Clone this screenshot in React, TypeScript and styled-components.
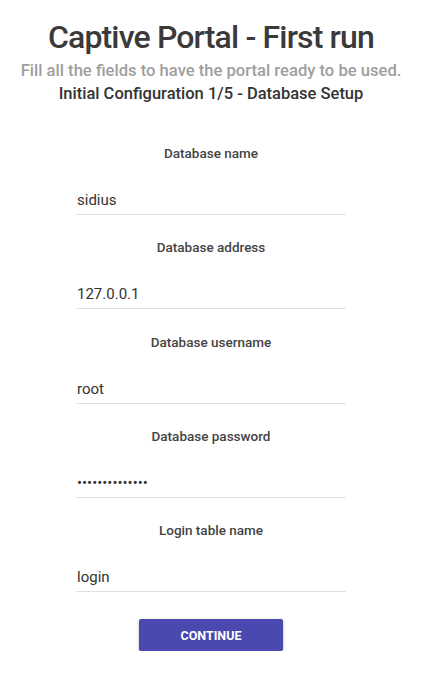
import * as React from "react";
import styled, { createGlobalStyle } from "styled-components";

const GlobalStyle = createGlobalStyle`
    body {
        margin: 0;
        background: #fff;
        font-family: Roboto, "Liberation Sans", sans-serif;
    }
`;

const Page = styled.div`
    display: flex;
    flex-direction: column;
    align-items: center;
    padding: 17px 5px 0 0;
`;

const Title = styled.h1`
    margin: 0;
    font-size: 32px;
    font-weight: 500;
    letter-spacing: -0.85px;
    color: #3a3a3a;
    line-height: 40px;
`;

const Subtitle = styled.div`
    margin-top: 4px;
    font-size: 16.6px;
    font-weight: 500;
    color: #9e9e9e;
    line-height: 20px;
`;

const StepTitle = styled.div`
    margin-top: 2px;
    font-size: 16.5px;
    font-weight: 500;
    color: #333;
    line-height: 22px;
`;

const Form = styled.form`
    display: flex;
    flex-direction: column;
    width: 270px;
    margin-top: 40px;
`;

const Field = styled.div`
    display: flex;
    flex-direction: column;
    height: 94.25px;
`;

const Label = styled.label`
    text-align: center;
    font-size: 13.5px;
    font-weight: 500;
    color: #444;
    line-height: 16px;
`;

const Input = styled.input`
    margin-top: 23px;
    border: none;
    border-bottom: 1px solid #e0e0e0;
    outline: none;
    padding: 7px 1px 5px;
    font-family: Roboto, "Liberation Sans", sans-serif;
    font-size: 15px;
    color: #333;
    background: transparent;
`;

const ContinueButton = styled.button`
    align-self: center;
    width: 144px;
    height: 32px;
    margin-top: 3px;
    border: none;
    border-radius: 2px;
    background: #4949b0;
    color: #fff;
    font-family: Roboto, "Liberation Sans", sans-serif;
    font-size: 12.5px;
    font-weight: 700;
    text-transform: uppercase;
    box-shadow: 0 1px 3px rgba(0, 0, 0, 0.3);
`;

interface FieldDef {
    label: string;
    value: string;
    secret?: boolean;
}

const fields: FieldDef[] = [
    {label: "Database name", value: "sidius"},
    {label: "Database address", value: "127.0.0.1"},
    {label: "Database username", value: "root"},
    {label: "Database password", value: "verysecretpwd1", secret: true},
    {label: "Login table name", value: "login"},
];

export default function App() {
    return (
        <Page>
            <GlobalStyle />
            <Title>Captive Portal - First run</Title>
            <Subtitle>Fill all the fields to have the portal ready to be used.</Subtitle>
            <StepTitle>Initial Configuration 1/5 - Database Setup</StepTitle>
            <Form>
                {fields.map(f => (
                    <Field key={f.label}>
                        <Label>{f.label}</Label>
                        <Input
                            type={f.secret ? "password" : "text"}
                            defaultValue={f.value}
                        />
                    </Field>
                ))}
                <ContinueButton type="button">Continue</ContinueButton>
            </Form>
        </Page>
    );
}
